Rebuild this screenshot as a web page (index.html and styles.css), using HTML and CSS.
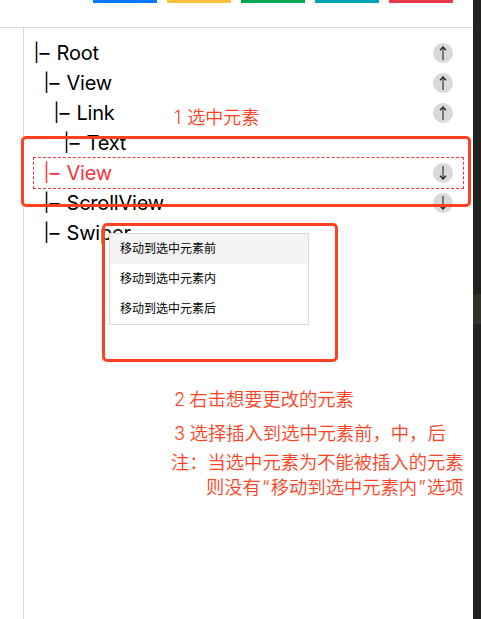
FILE: index.html
```html
<!DOCTYPE html>
<html lang="zh-CN">
<head>
<meta charset="utf-8">
<title>元素树</title>
<link rel="stylesheet" href="styles.css">
</head>
<body>
<div class="app">
  <header class="toolbar">
    <span class="button blue"></span><span class="button yellow"></span><span class="button green"></span><span class="button teal"></span><span class="button red"></span>
  </header>
  <div class="body">
    <aside class="gutter"></aside>
    <main class="tree">
      <div class="row"><span class="bar">|</span><span class="dash">–</span><span class="name">Root</span><svg class="move" viewBox="0 0 20 20"><path class="stem" d="M10 5v12"/><path class="head" d="M7 7.2L10 4l3 3.2"/></svg></div>
      <div class="row level1"><span class="bar">|</span><span class="dash">–</span><span class="name">View</span><svg class="move" viewBox="0 0 20 20"><path class="stem" d="M10 5v12"/><path class="head" d="M7 7.2L10 4l3 3.2"/></svg></div>
      <div class="row level2"><span class="bar">|</span><span class="dash">–</span><span class="name">Link</span><svg class="move" viewBox="0 0 20 20"><path class="stem" d="M10 5v12"/><path class="head" d="M7 7.2L10 4l3 3.2"/></svg></div>
      <div class="row level3"><span class="bar">|</span><span class="dash">–</span><span class="name">Text</span></div>
      <div class="row level1 selected"><span class="bar">|</span><span class="dash">–</span><span class="name">View</span><svg class="move" viewBox="0 0 20 20"><path class="stem" d="M10 3v12"/><path class="head" d="M7 12.8l3 3.2 3-3.2"/></svg></div>
      <div class="row level1"><span class="bar">|</span><span class="dash">–</span><span class="name">ScrollView</span><svg class="move" viewBox="0 0 20 20"><path class="stem" d="M10 3v12"/><path class="head" d="M7 12.8l3 3.2 3-3.2"/></svg></div>
      <div class="row level1"><span class="bar">|</span><span class="dash">–</span><span class="name">Swiper</span></div>
    </main>
    <aside class="edge"></aside>
  </div>
  <div class="frame frame-row"></div>
  <div class="frame frame-menu"></div>
  <ul class="menu">
    <li class="active">移动到选中元素前</li>
    <li>移动到选中元素内</li>
    <li>移动到选中元素后</li>
  </ul>
  <p class="note note1">1 选中元素</p>
  <p class="note note2">2 右击想要更改的元素</p>
  <p class="note note3">3 选择插入到选中元素前，中，后</p>
  <p class="note note4">注：当选中元素为不能被插入的元素</p>
  <p class="note note5">则没有<span class="quote">“</span>移动到选中元素内<span class="quote">”</span>选项</p>
</div>
</body>
</html>
```
FILE: styles.css
```css
* { box-sizing: border-box; }
body {
  margin: 0;
  background: #fff;
  color: #000;
  font-family: Inter, "Noto Sans CJK SC", sans-serif;
}
.app {
  position: relative;
  display: flex;
  flex-direction: column;
  width: 481px;
  height: 619px;
  overflow: hidden;
}
.toolbar {
  display: flex;
  flex: none;
  gap: 10px;
  height: 28px;
  margin-right: 8px;
  padding-left: 93px;
  border-bottom: 1px solid #d9d9d9;
}
.button { width: 64px; height: 3px; }
.blue { background: #007bff; }
.yellow { background: #ffc037; }
.green { background: #00a854; }
.teal { background: #00a2b8; }
.red { background: #e83a4b; }
.body { display: flex; flex: 1; }
.gutter { width: 24px; border-right: 1px solid #d9d9d9; }
.tree { flex: 1; padding: 10px 9px 0; }
.row {
  display: flex;
  align-items: center;
  height: 30px;
  padding: 0 11px 0 1px;
  font-size: 20px;
  line-height: 30px;
}
.level1 { padding-left: 11px; }
.level2 { padding-left: 21px; }
.level3 { padding-left: 31px; }
.selected {
  height: 32px;
  margin: -1px 0;
  padding: 0 10px;
  border: 1px dashed #f5333f;
  color: #f5333f;
}
.bar { width: 5px; display: flex; justify-content: center; font-size: 18px; }
.dash {
  display: flex;
  justify-content: center;
  width: 11px;
  margin-right: 6.5px;
  font-size: 20px;
}
.name { flex: 1; letter-spacing: -0.2px; }
.move {
  width: 20px;
  height: 20px;
  border-radius: 50%;
  background: #d9d9d9;
  fill: none;
}
.stem { stroke: #777; stroke-width: 2; }
.head { stroke: #222; stroke-width: 1.4; }
.edge {
  width: 8px;
  margin-top: -28px;
  background: linear-gradient(#20221d 294px, #30322a 294px, #30322a 324px, #20221d 324px);
}
.frame {
  position: absolute;
  border: 3px solid #ff4122;
  border-radius: 5px;
}
.frame-row { left: 21px; top: 136px; width: 450px; height: 71px; }
.frame-menu { left: 102px; top: 223px; width: 236px; height: 139px; }
.menu {
  position: absolute;
  left: 109px;
  top: 233px;
  width: 200px;
  height: 92px;
  margin: 0;
  padding: 0;
  border: 1px solid #d9d9d9;
  background: #fff;
  list-style: none;
  font: 12px/28px "Noto Sans CJK SC", sans-serif;
}
.menu li { height: 30px; padding-left: 10px; }
.menu .active { background: #f4f4f4; }
.note {
  position: absolute;
  margin: 0;
  color: #ff4122;
  font: 350 18.3px/26px Inter, "Noto Sans CJK SC", sans-serif;
  white-space: nowrap;
}
.note1 { left: 174px; top: 105px; font-size: 18px; word-spacing: 1px; }
.note2 { left: 174px; top: 386px; word-spacing: -1px; }
.note3 { left: 174px; top: 420px; word-spacing: -0.5px; }
.note4 { left: 171px; top: 449px; }
.note5 { left: 206px; top: 474px; }
.quote { display: inline-block; width: 10px; text-align: center; }
```
